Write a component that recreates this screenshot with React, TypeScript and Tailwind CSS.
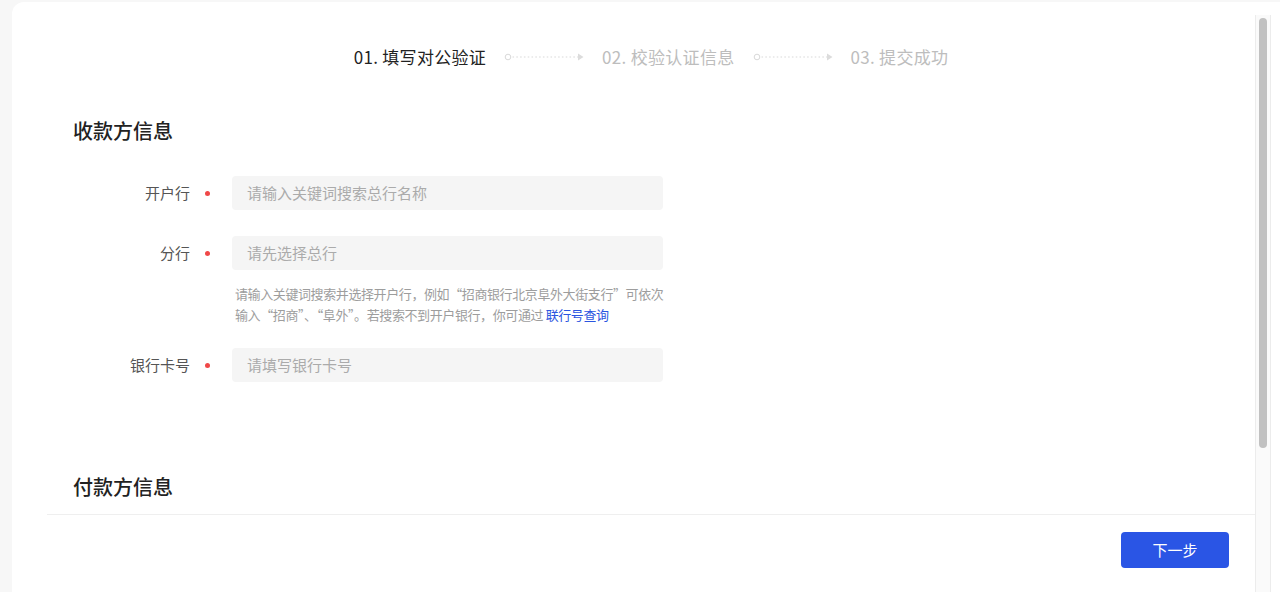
import React from 'react';

const font = { fontFamily: '"PingFang SC", "Noto Sans CJK SC", "Noto Sans", sans-serif' };

function StepLink() {
  return (
    <svg width="80" height="10" viewBox="0 0 80 10" className="shrink-0">
      <circle cx="4" cy="5" r="2.8" fill="none" stroke="#d9d9d9" strokeWidth="1" />
      <line x1="8.5" y1="5" x2="74" y2="5" stroke="#d9d9d9" strokeWidth="1.2" strokeDasharray="1.6 2.2" />
      <path d="M74 1.5 L79.5 5 L74 8.5 Z" fill="#dcdcdc" />
    </svg>
  );
}

function Field({ label, placeholder }: { label: string; placeholder: string }) {
  return (
    <div className="flex items-center">
      <div className="w-[117px] text-right text-[15px] leading-[22px] text-[#555]">{label}</div>
      <span className="ml-[15px] w-[5px] h-[5px] rounded-full bg-[#f04848] shrink-0" />
      <div className="ml-[22px] w-[431px] h-[34px] rounded-[4px] bg-[#f5f5f5] flex items-center pl-[15px] text-[15px] text-[#ababab]">
        {placeholder}
      </div>
    </div>
  );
}

export default function App() {
  const steps = ['01. 填写对公验证', '02. 校验认证信息', '03. 提交成功'];

  return (
    <div className="h-[592px] w-[1280px] bg-[#f7f7f7] pl-3 pt-[2px] overflow-hidden" style={font}>
      <div className="h-full bg-white rounded-tl-[12px] flex">
        <div className="flex-1 flex flex-col min-w-0">
          {/* Content */}
          <div className="flex-1 overflow-hidden ml-[35px]">
            <div className="mt-[43px] flex items-center justify-center h-[24px]">
              {steps.map((s, i) => (
                <React.Fragment key={s}>
                  {i > 0 && (
                    <div className="mx-[18px] flex items-center">
                      <StepLink />
                    </div>
                  )}
                  <span
                    className={`text-[17px] leading-[24px] tracking-[0.3px] whitespace-nowrap ${
                      i === 0 ? 'text-[#222]' : 'text-[#bdbdbd]'
                    }`}
                  >
                    {s}
                  </span>
                </React.Fragment>
              ))}
            </div>

            <div className="pl-[26px]">
              <h2 className="mt-[48px] text-[20px] leading-[28px] font-medium text-[#222]">收款方信息</h2>

              <div className="mt-[31px]">
                <Field label="开户行" placeholder="请输入关键词搜索总行名称" />
              </div>
              <div className="mt-[26px]">
                <Field label="分行" placeholder="请先选择总行" />
              </div>
              <div className="mt-[13px] ml-[162px] text-[13px] leading-[21px] text-[#9d9d9d] tracking-[-0.4px]">
                <div className="whitespace-nowrap">请输入关键词搜索并选择开户行，例如“招商银行北京阜外大街支行”可依次</div>
                <div className="whitespace-nowrap">
                  输入“招商”、“阜外”。若搜索不到开户银行，你可通过 <span className="text-[#2b55e0] cursor-pointer">联行号查询</span>
                </div>
              </div>
              <div className="mt-[23px]">
                <Field label="银行卡号" placeholder="请填写银行卡号" />
              </div>

              <h2 className="mt-[91px] text-[20px] leading-[28px] font-medium text-[#222]">付款方信息</h2>
            </div>
          </div>

          {/* Footer */}
          <div className="ml-[35px] border-t border-[#efefef] pt-[17px] pb-[24px] pr-[26px] flex justify-end">
            <button className="w-[108px] h-[36px] rounded-[4px] bg-[#2a55e5] text-white text-[15px]">下一步</button>
          </div>
        </div>

        {/* Scrollbar */}
        <div className="w-[16px] pt-[13px] shrink-0">
          <div className="h-full border-x border-[#ececec] bg-[#fafafa] pt-[3px] flex justify-center">
            <div className="w-[8px] h-[430px] rounded-full bg-[#c1c1c1]" />
          </div>
        </div>
        <div className="w-[9px] shrink-0" />
      </div>
    </div>
  );
}
